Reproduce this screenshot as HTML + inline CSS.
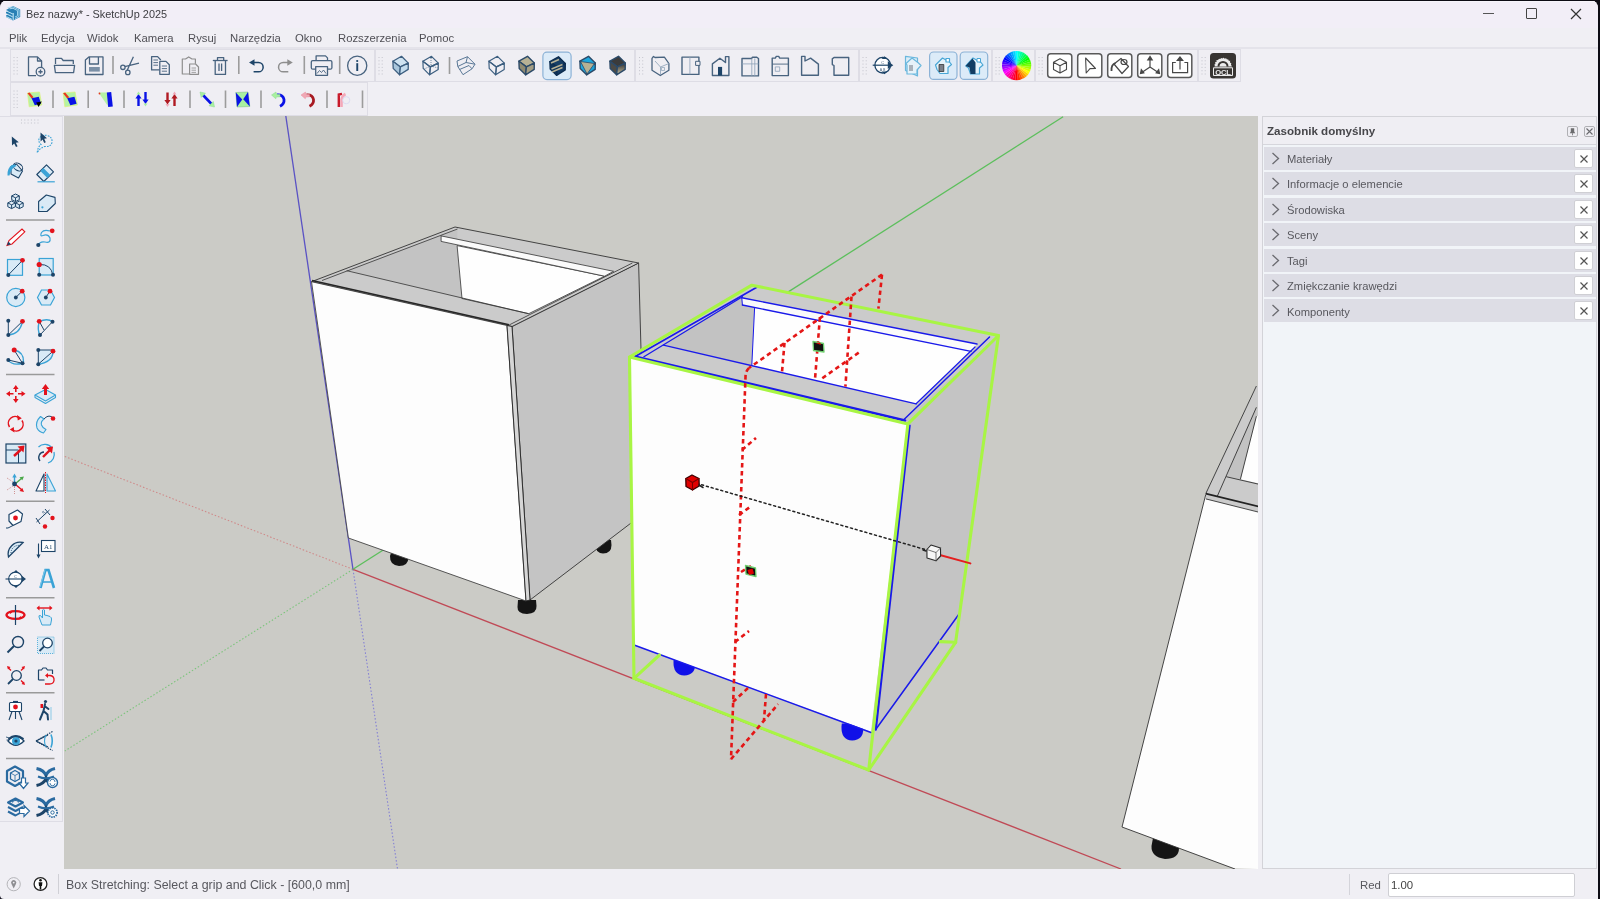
<!DOCTYPE html>
<html><head><meta charset="utf-8">
<style>
html,body{margin:0;padding:0;width:1600px;height:899px;overflow:hidden;background:#0d0c14;}
*{box-sizing:border-box;}
body{font-family:"Liberation Sans",sans-serif;position:relative;}
.abs{position:absolute;}
#win{position:absolute;left:0;top:0;width:1598px;height:899px;background:#f0eff4;border-radius:8px 8px 0 0;overflow:hidden;}
#title{position:absolute;left:0;top:0;width:1598px;height:27.5px;background:#f2eef7;}
.t{position:absolute;white-space:nowrap;color:#3a3a3a;line-height:1;will-change:transform;}
.menu{font-size:11.3px;color:#505056;top:33.2px;}
.tb{position:absolute;background:#efeef3;border:1px solid #dedde5;}
.sep{position:absolute;width:2px;background:#9a9a9a;}
.ic{position:absolute;}
#vp{position:absolute;left:64px;top:116px;width:1194px;height:753px;background:#cbcbc6;overflow:hidden;}
#panel{position:absolute;left:1262px;top:116px;width:335px;height:753px;background:#f1f4f8;border:1px solid #d3d3d8;}
.row{position:absolute;left:1px;width:332px;height:23px;background:#dddde5;}
.row .lbl{will-change:transform;position:absolute;left:22.5px;top:7.3px;font-size:11.2px;line-height:1;color:#58585e;}
.row .x{position:absolute;left:310px;top:2px;width:19px;height:19px;background:#fff;border:1px solid #cfcfd4;border-radius:2px;}
</style></head><body>
<div id="win">
 <div id="title">
  <div class="abs" style="left:0;top:0;width:1598px;height:2px;background:#f7f5fb"></div>
  <svg class="abs" style="left:0;top:0" width="26" height="26" viewBox="0 0 26 26"><path d="M13 6 L20.2 9.6 V17 L13 20.6 L6 17 V15.5 L8 14.5 L6 13.5 V12 L8 11 L6 10 Z" fill="#2a80b4"/><path d="M7.6 7.6 L13 6.9 L19 9.9 V16.6 L15 18.6 M9.5 8.8 L13 8.3 L17.5 10.6 V15.8 L15 17" stroke="#aedcf2" stroke-width="0.9" fill="none"/><path d="M6.3 10.9 L12.8 14 M6.3 13.8 L12.8 16.9 M6.3 16.6 L12 19.4" stroke="#bfe4f5" stroke-width="1" fill="none"/><path d="M13.2 13 V20.3" stroke="#bfe4f5" stroke-width="1.1"/></svg>
  <div class="t" style="left:26px;top:8.8px;font-size:10.9px;color:#3c3c40">Bez nazwy* - SketchUp 2025</div>
  <div class="abs" style="left:1483px;top:13px;width:11px;height:1px;background:#555"></div>
  <div class="abs" style="left:1526px;top:8px;width:11px;height:11px;border:1.3px solid #444;border-radius:1px"></div>
  <svg class="abs" style="left:1570px;top:8px" width="12" height="12" viewBox="0 0 12 12"><path d="M1 1L11 11M11 1L1 11" stroke="#333" stroke-width="1.2"/></svg>
 </div>
 <div class="t menu" style="left:9.3px">Plik</div>
 <div class="t menu" style="left:41.2px">Edycja</div>
 <div class="t menu" style="left:87px">Widok</div>
 <div class="t menu" style="left:134px">Kamera</div>
 <div class="t menu" style="left:188px">Rysuj</div>
 <div class="t menu" style="left:229.7px">Narzędzia</div>
 <div class="t menu" style="left:295.4px">Okno</div>
 <div class="t menu" style="left:337.7px">Rozszerzenia</div>
 <div class="t menu" style="left:419.4px">Pomoc</div>
 <div class="abs" style="left:0;top:47px;width:1598px;height:2px;background:#e4e3ea"></div>

 <!-- toolbars -->
 <div class="tb" style="left:10px;top:49px;width:365px;height:33px"></div>
 <div class="tb" style="left:375px;top:49px;width:260px;height:33px"></div>
 <div class="tb" style="left:635px;top:49px;width:224px;height:33px"></div>
 <div class="tb" style="left:859px;top:49px;width:133px;height:33px"></div>
 <div class="tb" style="left:992px;top:49px;width:43px;height:33px"></div>
 <div class="tb" style="left:1035px;top:49px;width:163px;height:33px"></div>
 <div class="tb" style="left:1198px;top:49px;width:43px;height:33px"></div>
 <div class="tb" style="left:10px;top:82px;width:358px;height:34px"></div>

 <svg class="abs" style="left:0;top:0" width="1600" height="116" viewBox="0 0 1600 116"><rect x="13.5" y="57.0" width="1" height="1" fill="#c4c4cc"/><rect x="16.7" y="57.0" width="1" height="1" fill="#c4c4cc"/><rect x="13.5" y="60.3" width="1" height="1" fill="#c4c4cc"/><rect x="16.7" y="60.3" width="1" height="1" fill="#c4c4cc"/><rect x="13.5" y="63.6" width="1" height="1" fill="#c4c4cc"/><rect x="16.7" y="63.6" width="1" height="1" fill="#c4c4cc"/><rect x="13.5" y="66.9" width="1" height="1" fill="#c4c4cc"/><rect x="16.7" y="66.9" width="1" height="1" fill="#c4c4cc"/><rect x="13.5" y="70.2" width="1" height="1" fill="#c4c4cc"/><rect x="16.7" y="70.2" width="1" height="1" fill="#c4c4cc"/><rect x="13.5" y="73.5" width="1" height="1" fill="#c4c4cc"/><rect x="16.7" y="73.5" width="1" height="1" fill="#c4c4cc"/><g fill="none" stroke="#48637f" stroke-width="1.3" stroke-linejoin="round"><path d="M36 75.6 H28.5 V56.9 H37.5 L41.6 61 V68"/><path d="M37.5 56.9 V61 H41.6"/><circle cx="40.5" cy="71.7" r="4.3" fill="#f0eff4"/><path d="M40.5 69.6 V73.8 M38.4 71.7 H42.6" stroke-width="1.4"/></g><g fill="none" stroke="#48637f" stroke-width="1.3" stroke-linejoin="round"><path d="M55.5 64 V58.3 H61.5 L63.2 60.5 H73.3 V64"/><path d="M54.4 65.4 H74.6 L73.6 72.6 H55.4 Z"/></g><g fill="none" stroke="#48637f" stroke-width="1.3" stroke-linejoin="round"><path d="M85.4 60 L88.9 56.9 H103 V74.5 H85.4 Z"/><path d="M89.5 57 V64 H98.4 V57"/></g><rect x="89" y="67" width="10.8" height="4.6" fill="#7a8fa6"/><line x1="113" y1="56" x2="113" y2="74" stroke="#9c9c9c" stroke-width="1.6"/><g fill="none" stroke="#48637f" stroke-width="1.3"><circle cx="122.9" cy="67.3" r="2.2"/><circle cx="127.8" cy="72.4" r="2.2"/><path d="M124.8 66.6 L139 63.1 M127.2 70.3 L133.4 56.8"/></g><g fill="none" stroke="#48637f" stroke-width="1.3" stroke-linejoin="round"><path d="M159.6 69.9 H151.6 V56.6 H157.6 L160.8 60"/><path d="M159.8 61.4 H166 L169.3 64.7 V74.3 H159.8 Z" fill="#f0eff4"/><path d="M153.4 60 H158 M153.4 62.6 H158 M153.4 65.2 H158 M161.8 66 H167 M161.8 68.6 H167 M161.8 71.2 H167" stroke-width="0.9"/></g><g fill="none" stroke="#8e8e8e" stroke-width="1.2" stroke-linejoin="round"><path d="M189 74 H182.3 V59 H185.5 L188.7 56.9 L192 59 H195.4 V63.8"/><path d="M189.6 64 H195.6 L198.5 67 V74.3 H189.6 Z" fill="#f0eff4"/><path d="M191.5 68 H196 M191.5 70.2 H196 M191.5 72.4 H196" stroke-width="0.8"/></g><g fill="none" stroke="#48637f" stroke-width="1.3" stroke-linejoin="round"><path d="M212.8 60.5 H227.6"/><path d="M217.5 60.4 V57.6 H223.7 V60.4"/><path d="M215.2 60.6 V74.4 H225.5 V60.6"/><path d="M219 63.5 V71 M221.6 63.5 V71"/></g><line x1="238.8" y1="56" x2="238.8" y2="74" stroke="#9c9c9c" stroke-width="1.6"/><g><path d="M253 62.5 H258.5 A4.6 4.6 0 0 1 258.5 71.8 H253.6" fill="none" stroke="#1d4468" stroke-width="1.5"/><path d="M249 62.5 L254.5 59.3 V65.7 Z" fill="#1d4468"/></g><g><path d="M288.7 62.5 H283.2 A4.6 4.6 0 0 0 283.2 71.8 H288.3" fill="none" stroke="#8e8e8e" stroke-width="1.5"/><path d="M292.8 62.5 L287.3 59.3 V65.7 Z" fill="#8e8e8e"/></g><line x1="304.3" y1="56" x2="304.3" y2="74" stroke="#9c9c9c" stroke-width="1.6"/><g fill="none" stroke="#48637f" stroke-width="1.3" stroke-linejoin="round"><path d="M316.1 60.5 V55.9 H325.5 L327.5 57.9 V60.5"/><rect x="311.3" y="60.6" width="20.6" height="8.6" rx="1.5"/><rect x="315.7" y="66.6" width="11.8" height="8.7" fill="#f0eff4"/><path d="M317 73.5 L319.5 70.5 L321.5 72.5 L323.5 70 L326 73.5" stroke-width="0.9"/></g><line x1="339.7" y1="56" x2="339.7" y2="74" stroke="#9c9c9c" stroke-width="1.6"/><g><circle cx="357.2" cy="65.7" r="9.6" fill="none" stroke="#48637f" stroke-width="1.3"/><circle cx="357.2" cy="61" r="1.1" fill="#1d4468"/><rect x="356.3" y="63.2" width="1.9" height="7.8" fill="#1d4468"/></g><rect x="378.5" y="57.0" width="1" height="1" fill="#c4c4cc"/><rect x="381.7" y="57.0" width="1" height="1" fill="#c4c4cc"/><rect x="378.5" y="60.3" width="1" height="1" fill="#c4c4cc"/><rect x="381.7" y="60.3" width="1" height="1" fill="#c4c4cc"/><rect x="378.5" y="63.6" width="1" height="1" fill="#c4c4cc"/><rect x="381.7" y="63.6" width="1" height="1" fill="#c4c4cc"/><rect x="378.5" y="66.9" width="1" height="1" fill="#c4c4cc"/><rect x="381.7" y="66.9" width="1" height="1" fill="#c4c4cc"/><rect x="378.5" y="70.2" width="1" height="1" fill="#c4c4cc"/><rect x="381.7" y="70.2" width="1" height="1" fill="#c4c4cc"/><rect x="378.5" y="73.5" width="1" height="1" fill="#c4c4cc"/><rect x="381.7" y="73.5" width="1" height="1" fill="#c4c4cc"/><g stroke="#3d5f80" stroke-width="1.3" stroke-linejoin="round"><polygon points="401.5,56.3 408.3,63.1 400.4,66.9 392.9,61.2" fill="#cfe3f1"/><polygon points="392.9,61.2 400.4,66.9 399.6,74.8 393.2,68.4" fill="#a9c6dc"/><polygon points="400.4,66.9 408.3,63.1 408.2,69.4 399.6,74.8" fill="#c4dced"/></g><g stroke="#3d5f80" stroke-width="1.2" stroke-linejoin="round"><polygon points="431.5,56.3 438.3,63.1 430.4,66.9 422.9,61.2" fill="none"/><polygon points="422.9,61.2 430.4,66.9 429.6,74.8 423.2,68.4" fill="none"/><polygon points="430.4,66.9 438.3,63.1 438.2,69.4 429.6,74.8" fill="none"/><path d="M431 58 V66 L424 69 M431 66 L438 68" stroke-width="0.7" stroke-dasharray="1 1" fill="none"/></g><line x1="449.5" y1="57" x2="449.5" y2="74" stroke="#9c9c9c" stroke-width="1.6"/><g fill="none" stroke="#5a7896" stroke-width="1"><path d="M457 61 L467.5 56.7 L475 64.2 L472 68.8 L463 74.7 L457.8 66.5 Z M457.8 66.5 L466 62.5 L475 64.2 M466 62.5 L467.5 56.7 M459.5 69.5 L469 65.5 L472 68.8"/></g><g stroke="#3d5f80" stroke-width="1.2" stroke-linejoin="round"><polygon points="497.5,56.3 504.3,63.1 496.4,66.9 488.9,61.2" fill="none"/><polygon points="488.9,61.2 496.4,66.9 495.6,74.8 489.2,68.4" fill="none"/><polygon points="496.4,66.9 504.3,63.1 504.2,69.4 495.6,74.8" fill="none"/></g><g stroke="#2c4a68" stroke-width="1.4" stroke-linejoin="round"><polygon points="527.5,56.3 534.3,63.1 526.4,66.9 518.9,61.2" fill="#b7b194"/><polygon points="518.9,61.2 526.4,66.9 525.6,74.8 519.2,68.4" fill="#8e8a72"/><polygon points="526.4,66.9 534.3,63.1 534.2,69.4 525.6,74.8" fill="#a49e84"/></g><rect x="542.9" y="52.2" width="28.200000000000045" height="27.39999999999999" rx="4" fill="#dcebf8" stroke="#8cb2d6" stroke-width="1.2"/><g stroke="#0d2d50" stroke-width="1.4" stroke-linejoin="round"><polygon points="558.5,56.8 565.3,63.6 557.4,67.4 549.9,61.7" fill="#173f66"/><polygon points="549.9,61.7 557.4,67.4 556.6,75.3 550.2,68.9" fill="#0f3358"/><polygon points="557.4,67.4 565.3,63.6 565.2,69.9 556.6,75.3" fill="#153b62"/><path d="M551 63 L559 59.5 M551.5 69 L562.5 64.5 M552 72 L562.5 67.5" stroke="#b7b194" stroke-width="1.5" fill="none"/></g><g stroke="#2c4a68" stroke-width="1.4" stroke-linejoin="round"><polygon points="588.5,56.3 595.3,63.1 587.4,66.9 579.9,61.2" fill="#1ea6dc"/><polygon points="579.9,61.2 587.4,66.9 586.6,74.8 580.2,68.4" fill="#22a8de"/><polygon points="587.4,66.9 595.3,63.1 595.2,69.4 586.6,74.8" fill="#1aa0d6"/><polygon points="580.5,61.5 594.5,63.5 587,74" fill="#b7b194" stroke="#2c4a68" stroke-width="0.8"/></g><defs><linearGradient id="dg" x1="0" y1="0" x2="0" y2="1"><stop offset="0" stop-color="#2d2d2d"/><stop offset="1" stop-color="#c9c0a0"/></linearGradient></defs><g stroke="#2c4a68" stroke-width="1.4" stroke-linejoin="round"><polygon points="618.5,56.3 625.3,63.1 617.4,66.9 609.9,61.2" fill="#3b3b3b"/><polygon points="609.9,61.2 617.4,66.9 616.6,74.8 610.2,68.4" fill="#4c4a45"/><polygon points="617.4,66.9 625.3,63.1 625.2,69.4 616.6,74.8" fill="url(#dg)"/></g><rect x="639.0" y="57.0" width="1" height="1" fill="#c4c4cc"/><rect x="642.2" y="57.0" width="1" height="1" fill="#c4c4cc"/><rect x="639.0" y="60.3" width="1" height="1" fill="#c4c4cc"/><rect x="642.2" y="60.3" width="1" height="1" fill="#c4c4cc"/><rect x="639.0" y="63.6" width="1" height="1" fill="#c4c4cc"/><rect x="642.2" y="63.6" width="1" height="1" fill="#c4c4cc"/><rect x="639.0" y="66.9" width="1" height="1" fill="#c4c4cc"/><rect x="642.2" y="66.9" width="1" height="1" fill="#c4c4cc"/><rect x="639.0" y="70.2" width="1" height="1" fill="#c4c4cc"/><rect x="642.2" y="70.2" width="1" height="1" fill="#c4c4cc"/><rect x="639.0" y="73.5" width="1" height="1" fill="#c4c4cc"/><rect x="642.2" y="73.5" width="1" height="1" fill="#c4c4cc"/><g fill="none" stroke="#48637f" stroke-width="1.3" stroke-linejoin="round"><path d="M652 58.3 L653.5 56.4 L655 57.5 L664.4 57.1 L668.9 63.5 V70.2 L660.3 75.5 L652 70.2 Z"/><path d="M655 61 L660.5 67 L668.9 63.5 M660.5 67 V75" stroke-width="0.8" stroke="#8aa0b6"/><rect x="661.5" y="67.5" width="3" height="3" stroke-width="0.7" stroke="#8aa0b6"/></g><g fill="none" stroke="#48637f" stroke-width="1.4" stroke-linejoin="round"><rect x="682" y="57.1" width="16.9" height="17.3"/><path d="M689.9 57.1 V74.4" stroke-width="0.8" stroke="#8aa0b6"/><rect x="695.6" y="61.3" width="4.4" height="4.1" fill="#f0eff4" stroke-width="1"/></g><g fill="none" stroke="#48637f" stroke-width="1.4" stroke-linejoin="round"><path d="M712.4 75.5 V63.9 L719.9 58.3 L725.5 62.5 V56.6 H728.9 V75.5 Z"/><rect x="718" y="66.9" width="4.1" height="8.6" fill="#1d4468" stroke="none"/></g><g fill="none" stroke="#48637f" stroke-width="1.4" stroke-linejoin="round"><path d="M742 75.9 V58.5 H751.5 L752.5 57.2 H756.5 L758.5 58.5 V75.9 Z"/><path d="M742 63.9 H758.5 M751.8 58.5 V75.9 M754.8 58.5 V75.9" stroke-width="0.8" stroke="#8aa0b6"/></g><g fill="none" stroke="#48637f" stroke-width="1.4" stroke-linejoin="round"><path d="M772.2 75.6 V58.1 H775.3 L776.3 56.4 H778.7 L779.7 58.1 H788.4 V75.6 Z"/><path d="M772.2 64.1 H788.4" stroke-width="0.9"/><rect x="775.3" y="66.9" width="4.4" height="4.4" stroke-width="0.8" stroke="#8aa0b6"/></g><g fill="none" stroke="#48637f" stroke-width="1.4" stroke-linejoin="round"><path d="M801.6 75.3 V56.4 H805 V61 L810.6 58.1 L818.4 64.1 V75.3 Z"/></g><g fill="none" stroke="#48637f" stroke-width="1.4" stroke-linejoin="round"><path d="M834 75.3 V65.5 L832.3 64.6 V58.9 L834 57.5 H848.7 V75.3 Z"/></g><rect x="862.5" y="57.0" width="1" height="1" fill="#c4c4cc"/><rect x="865.7" y="57.0" width="1" height="1" fill="#c4c4cc"/><rect x="862.5" y="60.3" width="1" height="1" fill="#c4c4cc"/><rect x="865.7" y="60.3" width="1" height="1" fill="#c4c4cc"/><rect x="862.5" y="63.6" width="1" height="1" fill="#c4c4cc"/><rect x="865.7" y="63.6" width="1" height="1" fill="#c4c4cc"/><rect x="862.5" y="66.9" width="1" height="1" fill="#c4c4cc"/><rect x="865.7" y="66.9" width="1" height="1" fill="#c4c4cc"/><rect x="862.5" y="70.2" width="1" height="1" fill="#c4c4cc"/><rect x="865.7" y="70.2" width="1" height="1" fill="#c4c4cc"/><rect x="862.5" y="73.5" width="1" height="1" fill="#c4c4cc"/><rect x="865.7" y="73.5" width="1" height="1" fill="#c4c4cc"/><g><circle cx="882.7" cy="65.2" r="7.8" fill="#fff" stroke="#1d4468" stroke-width="1.3"/><path d="M872.7 65.2 H890" stroke="#1d4468" stroke-width="1.2"/><path d="M893.3 65.2 L887.8 61.3 V69.1 Z M884.5 56.3 L881.5 59 H887.5 Z M884.5 74.2 L881.5 71.5 H887.5 Z" fill="#1d4468"/><text x="882.6" y="63.5" font-size="4" text-anchor="middle" fill="#48637f" font-family="Liberation Sans">C</text><text x="882.6" y="70.5" font-size="3.6" text-anchor="middle" fill="#48637f" font-family="Liberation Sans">A B</text></g><g stroke="#6ab7dd" stroke-width="1.2" fill="#cfe8f5" stroke-linejoin="round"><path d="M905.5 56.3 L917.5 58 L917.5 76 L905.5 70.5 Z" fill="#dcedf7"/><path d="M906 63.5 L912 58 L918.5 63 L921 65.5 L917 70 V74 L907 74 V65 Z" fill="#e6f2f9"/><rect x="909" y="65" width="4" height="6" fill="#a9b2bb" stroke="none"/></g><rect x="929.6" y="52.0" width="27.399999999999977" height="27.400000000000006" rx="4" fill="#dcebf8" stroke="#8cb2d6" stroke-width="1.2"/><g stroke="#4aa7d6" stroke-width="1.2" fill="#e6f3fa" stroke-linejoin="round"><path d="M935.5 65 L942.5 58 L949.5 62 L951.5 64.5 L948 67.5 V73.5 L940 73.5 L937 69.5 Z"/><path d="M946 58.5 V62 L949.5 62 V58.5 Z" fill="#fff"/><rect x="939" y="64.5" width="4.8" height="7" fill="#7a7f88" stroke="#222" stroke-width="0.7"/></g><rect x="960.2" y="52.0" width="27.5" height="27.400000000000006" rx="4" fill="#dcebf8" stroke="#8cb2d6" stroke-width="1.2"/><g stroke-linejoin="round"><path d="M965.8 66 L973 58 L981 62.5 L983 65 L979.5 68 V74 L970.5 74 L968.5 68 Z" fill="#e6f3fa" stroke="#4aa7d6" stroke-width="1.2"/><path d="M965.5 66 L972.5 58.5 L975.5 62.5 V74 H970.5 L969.5 67.5 Z" fill="#123d63"/><path d="M977 58.5 V62 L980.5 62 V58.5 Z" fill="#fff" stroke="#4aa7d6" stroke-width="1"/></g><rect x="995.5" y="57.0" width="1" height="1" fill="#c4c4cc"/><rect x="998.7" y="57.0" width="1" height="1" fill="#c4c4cc"/><rect x="995.5" y="60.3" width="1" height="1" fill="#c4c4cc"/><rect x="998.7" y="60.3" width="1" height="1" fill="#c4c4cc"/><rect x="995.5" y="63.6" width="1" height="1" fill="#c4c4cc"/><rect x="998.7" y="63.6" width="1" height="1" fill="#c4c4cc"/><rect x="995.5" y="66.9" width="1" height="1" fill="#c4c4cc"/><rect x="998.7" y="66.9" width="1" height="1" fill="#c4c4cc"/><rect x="995.5" y="70.2" width="1" height="1" fill="#c4c4cc"/><rect x="998.7" y="70.2" width="1" height="1" fill="#c4c4cc"/><rect x="995.5" y="73.5" width="1" height="1" fill="#c4c4cc"/><rect x="998.7" y="73.5" width="1" height="1" fill="#c4c4cc"/><defs><clipPath id="cw"><circle cx="1016.6" cy="65.6" r="14.6"/></clipPath></defs><g clip-path="url(#cw)"><polygon points="1016.6,65.6 1014.86,45.68 1018.52,45.69" fill="#00ffff"/><polygon points="1016.6,65.6 1018.34,45.68 1021.94,46.33" fill="#00ffd4"/><polygon points="1016.6,65.6 1021.78,46.28 1025.21,47.55" fill="#00ffa9"/><polygon points="1016.6,65.6 1025.05,47.47 1028.21,49.32" fill="#00ff7f"/><polygon points="1016.6,65.6 1028.07,49.22 1030.87,51.58" fill="#00ff55"/><polygon points="1016.6,65.6 1030.74,51.46 1033.08,54.27" fill="#00ff2a"/><polygon points="1016.6,65.6 1032.98,54.13 1034.80,57.31" fill="#00ff00"/><polygon points="1016.6,65.6 1034.73,57.15 1035.96,60.59" fill="#2aff00"/><polygon points="1016.6,65.6 1035.92,60.42 1036.54,64.03" fill="#54ff00"/><polygon points="1016.6,65.6 1036.52,63.86 1036.51,67.52" fill="#7fff00"/><polygon points="1016.6,65.6 1036.52,67.34 1035.87,70.94" fill="#aaff00"/><polygon points="1016.6,65.6 1035.92,70.78 1034.65,74.21" fill="#d4ff00"/><polygon points="1016.6,65.6 1034.73,74.05 1032.88,77.21" fill="#ffff00"/><polygon points="1016.6,65.6 1032.98,77.07 1030.62,79.87" fill="#ffd400"/><polygon points="1016.6,65.6 1030.74,79.74 1027.93,82.08" fill="#ffaa00"/><polygon points="1016.6,65.6 1028.07,81.98 1024.89,83.80" fill="#ff7f00"/><polygon points="1016.6,65.6 1025.05,83.73 1021.61,84.96" fill="#ff5400"/><polygon points="1016.6,65.6 1021.78,84.92 1018.17,85.54" fill="#ff2a00"/><polygon points="1016.6,65.6 1018.34,85.52 1014.68,85.51" fill="#ff0000"/><polygon points="1016.6,65.6 1014.86,85.52 1011.26,84.87" fill="#ff002a"/><polygon points="1016.6,65.6 1011.42,84.92 1007.99,83.65" fill="#ff0055"/><polygon points="1016.6,65.6 1008.15,83.73 1004.99,81.88" fill="#ff007f"/><polygon points="1016.6,65.6 1005.13,81.98 1002.33,79.62" fill="#ff00aa"/><polygon points="1016.6,65.6 1002.46,79.74 1000.12,76.93" fill="#ff00d4"/><polygon points="1016.6,65.6 1000.22,77.07 998.40,73.89" fill="#ff00ff"/><polygon points="1016.6,65.6 998.47,74.05 997.24,70.61" fill="#d400ff"/><polygon points="1016.6,65.6 997.28,70.78 996.66,67.17" fill="#aa00ff"/><polygon points="1016.6,65.6 996.68,67.34 996.69,63.68" fill="#7f00ff"/><polygon points="1016.6,65.6 996.68,63.86 997.33,60.26" fill="#5400ff"/><polygon points="1016.6,65.6 997.28,60.42 998.55,56.99" fill="#2a00ff"/><polygon points="1016.6,65.6 998.47,57.15 1000.32,53.99" fill="#0000ff"/><polygon points="1016.6,65.6 1000.22,54.13 1002.58,51.33" fill="#002aff"/><polygon points="1016.6,65.6 1002.46,51.46 1005.27,49.12" fill="#0054ff"/><polygon points="1016.6,65.6 1005.13,49.22 1008.31,47.40" fill="#007fff"/><polygon points="1016.6,65.6 1008.15,47.47 1011.59,46.24" fill="#00a9ff"/><polygon points="1016.6,65.6 1011.42,46.28 1015.03,45.66" fill="#00d4ff"/></g><rect x="1038.5" y="57.0" width="1" height="1" fill="#c4c4cc"/><rect x="1041.7" y="57.0" width="1" height="1" fill="#c4c4cc"/><rect x="1038.5" y="60.3" width="1" height="1" fill="#c4c4cc"/><rect x="1041.7" y="60.3" width="1" height="1" fill="#c4c4cc"/><rect x="1038.5" y="63.6" width="1" height="1" fill="#c4c4cc"/><rect x="1041.7" y="63.6" width="1" height="1" fill="#c4c4cc"/><rect x="1038.5" y="66.9" width="1" height="1" fill="#c4c4cc"/><rect x="1041.7" y="66.9" width="1" height="1" fill="#c4c4cc"/><rect x="1038.5" y="70.2" width="1" height="1" fill="#c4c4cc"/><rect x="1041.7" y="70.2" width="1" height="1" fill="#c4c4cc"/><rect x="1038.5" y="73.5" width="1" height="1" fill="#c4c4cc"/><rect x="1041.7" y="73.5" width="1" height="1" fill="#c4c4cc"/><rect x="1047.7" y="53.7" width="24.1" height="23.9" rx="3" fill="#fff" stroke="#595959" stroke-width="1.5"/><rect x="1077.7" y="53.7" width="24.1" height="23.9" rx="3" fill="#fff" stroke="#595959" stroke-width="1.5"/><rect x="1107.7" y="53.7" width="24.1" height="23.9" rx="3" fill="#fff" stroke="#595959" stroke-width="1.5"/><rect x="1137.7" y="53.7" width="24.1" height="23.9" rx="3" fill="#fff" stroke="#595959" stroke-width="1.5"/><rect x="1167.7" y="53.7" width="24.1" height="23.9" rx="3" fill="#fff" stroke="#595959" stroke-width="1.5"/><g fill="none" stroke="#474747" stroke-width="1.1" stroke-linejoin="round"><path d="M1060 58.7 L1066.5 62.3 V69.5 L1060 73 L1053.5 69.5 V62.3 Z M1053.5 62.3 L1060 65.8 L1066.5 62.3 M1060 65.8 V73"/></g><path d="M1085.6 58 L1095.5 68.5 L1090 68.6 L1086.2 73 Z" fill="none" stroke="#474747" stroke-width="1.1" stroke-linejoin="round"/><g fill="none" stroke="#474747" stroke-width="1.2" stroke-linejoin="round"><path d="M1114 64 L1121 58.5 L1128.5 66.5 L1122 73.5 Z"/><path d="M1111.5 71 Q1111 64.5 1115.5 63" stroke-width="1.8"/><ellipse cx="1124" cy="62" rx="3" ry="2.5"/></g><g stroke="#474747" stroke-width="1.2" fill="#474747"><path d="M1150 67 V59 M1150 67 L1142.5 72 M1150 67 L1157.5 72" fill="none"/><path d="M1150 56.5 L1147.8 60 H1152.2 Z M1140.5 73.5 L1141.3 69.7 L1143.8 72.8 Z M1159.5 73.5 L1158.7 69.7 L1156.2 72.8 Z"/></g><g fill="none" stroke="#474747" stroke-width="1.2"><path d="M1175.8 62.5 H1172.6 V72.6 H1187.6 V62.5 H1184.4 M1180 69.5 V58.5"/><path d="M1180 57 L1177.3 60.3 H1182.7 Z" fill="#474747"/></g><rect x="1201.5" y="57.0" width="1" height="1" fill="#c4c4cc"/><rect x="1204.7" y="57.0" width="1" height="1" fill="#c4c4cc"/><rect x="1201.5" y="60.3" width="1" height="1" fill="#c4c4cc"/><rect x="1204.7" y="60.3" width="1" height="1" fill="#c4c4cc"/><rect x="1201.5" y="63.6" width="1" height="1" fill="#c4c4cc"/><rect x="1204.7" y="63.6" width="1" height="1" fill="#c4c4cc"/><rect x="1201.5" y="66.9" width="1" height="1" fill="#c4c4cc"/><rect x="1204.7" y="66.9" width="1" height="1" fill="#c4c4cc"/><rect x="1201.5" y="70.2" width="1" height="1" fill="#c4c4cc"/><rect x="1204.7" y="70.2" width="1" height="1" fill="#c4c4cc"/><rect x="1201.5" y="73.5" width="1" height="1" fill="#c4c4cc"/><rect x="1204.7" y="73.5" width="1" height="1" fill="#c4c4cc"/><rect x="1210" y="53" width="26" height="25.5" rx="3.5" fill="#383532"/><path d="M1214.2 66.5 A8.8 8.8 0 0 1 1231.8 66.5 Z" fill="#ececec"/><path d="M1214.2 66.5 A8.8 8.8 0 0 1 1231.8 66.5" fill="none" stroke="#383532" stroke-width="1.2" stroke-dasharray="1.2 1.3"/><path d="M1217.5 66.5 A5.5 5.5 0 0 1 1228.5 66.5 Z" fill="#383532"/><path d="M1219.5 66.5 A3.5 3.5 0 0 1 1226.5 66.5 Z" fill="#ececec"/><rect x="1213" y="67.3" width="20" height="8.6" rx="1" fill="#ececec"/><rect x="1214" y="68.3" width="18" height="6.6" fill="#383532"/><text x="1223" y="74.6" font-size="7.6" font-weight="bold" text-anchor="middle" fill="#ececec" font-family="Liberation Sans" letter-spacing="-0.2">OCL</text><rect x="13.5" y="90.5" width="1" height="1" fill="#c4c4cc"/><rect x="16.7" y="90.5" width="1" height="1" fill="#c4c4cc"/><rect x="13.5" y="93.8" width="1" height="1" fill="#c4c4cc"/><rect x="16.7" y="93.8" width="1" height="1" fill="#c4c4cc"/><rect x="13.5" y="97.1" width="1" height="1" fill="#c4c4cc"/><rect x="16.7" y="97.1" width="1" height="1" fill="#c4c4cc"/><rect x="13.5" y="100.4" width="1" height="1" fill="#c4c4cc"/><rect x="16.7" y="100.4" width="1" height="1" fill="#c4c4cc"/><rect x="13.5" y="103.7" width="1" height="1" fill="#c4c4cc"/><rect x="16.7" y="103.7" width="1" height="1" fill="#c4c4cc"/><rect x="13.5" y="107.0" width="1" height="1" fill="#c4c4cc"/><rect x="16.7" y="107.0" width="1" height="1" fill="#c4c4cc"/><g transform="translate(0 0)"><polygon points="27.5,93 39.5,92 41.8,105 29.2,106.8" fill="#b4f2a4" stroke="#dcf07a" stroke-width="0.7"/><path d="M27.5 93.2 L29.6 92.6 L33.6 97.2 L31.6 98.6 Z" fill="#e8361e"/><polygon points="31.6,98.2 38.8,96.8 41,103.8 34.8,105.2" fill="#0a12e6"/></g><path d="M36.2 102.4 L41.8 101.6 L38.6 107 Z" fill="#000"/><line x1="53" y1="90.5" x2="53" y2="108" stroke="#9c9c9c" stroke-width="1.6"/><g transform="translate(35.6 0)"><polygon points="27.5,93 39.5,92 41.8,105 29.2,106.8" fill="#b4f2a4" stroke="#dcf07a" stroke-width="0.7"/><path d="M27.5 93.2 L29.6 92.6 L33.6 97.2 L31.6 98.6 Z" fill="#e8361e"/><polygon points="31.6,98.2 38.8,96.8 41,103.8 34.8,105.2" fill="#0a12e6"/></g><line x1="88.2" y1="90.5" x2="88.2" y2="108" stroke="#9c9c9c" stroke-width="1.6"/><polygon points="98.5,92.5 107.5,92.5 107.8,106" fill="#b4f2a4"/><circle cx="99.5" cy="93.5" r="0.9" fill="#e8361e"/><polygon points="106.8,92.6 111.2,92 112.8,106.5 108.2,107" fill="#0a12e6"/><line x1="124" y1="90.5" x2="124" y2="108" stroke="#9c9c9c" stroke-width="1.6"/><g><path d="M138.5 106 V97.5" stroke="#0a12e6" stroke-width="2.4" fill="none"/><path d="M138.5 94 L135.4 98.5 H141.6 Z" fill="#0a12e6"/><path d="M138.5 91.5 L136.5 94.5 H140.5 Z" fill="#a8f0a0"/><path d="M145.5 92 V100.5" stroke="#0a12e6" stroke-width="2.4" fill="none"/><path d="M145.5 104 L142.4 99.5 H148.6 Z" fill="#0a12e6"/><path d="M145.5 106.5 L143.5 103.5 H147.5 Z" fill="#a8f0a0"/></g><g><path d="M167.5 92.5 V101" stroke="#b01a22" stroke-width="2.4" fill="none"/><path d="M167.5 104.5 L164.4 100 H170.6 Z" fill="#b01a22"/><path d="M167.5 107 L165.5 104 H169.5 Z" fill="#f0a8b8"/><path d="M174.5 106 V97.5" stroke="#b01a22" stroke-width="2.4" fill="none"/><path d="M174.5 94 L171.4 98.5 H177.6 Z" fill="#b01a22"/><path d="M174.5 91.5 L172.5 94.5 H176.5 Z" fill="#f0a8b8"/></g><line x1="190" y1="90.5" x2="190" y2="108" stroke="#9c9c9c" stroke-width="1.6"/><g><path d="M202.5 94.5 L212 104.5" stroke="#0a12e6" stroke-width="2.6"/><path d="M200 92 L205.5 93.2 L201.2 97.5 Z M214.5 107 L209 105.8 L213.3 101.5 Z" fill="#a8f0a0" stroke="#8cd890" stroke-width="0.5"/></g><line x1="225.5" y1="90.5" x2="225.5" y2="108" stroke="#9c9c9c" stroke-width="1.6"/><g><polygon points="235.8,92.5 248,92 249.8,106.5 237,107" fill="#a8f0a0" stroke="#7ab880" stroke-width="0.5"/><polygon points="235.8,92.5 242.2,99.5 237,107" fill="#0a12e6"/><polygon points="248,92 243.2,99.3 249.8,106.5" fill="#0a12e6"/></g><line x1="261" y1="90.5" x2="261" y2="108" stroke="#9c9c9c" stroke-width="1.6"/><g><path d="M277 95 Q283 94.5 284 99.5 Q284.5 104 280 106.3" stroke="#0a12e6" stroke-width="2.8" fill="none"/><path d="M271.5 95 L276 92 L276.5 94.3 L280 94.6 V96.8 L276.3 97 L275.8 98.8 Z" fill="#a8f0a0" stroke="#8cd890" stroke-width="0.5"/></g><g><path d="M306.5 95 Q312.5 94.5 313.5 99.5 Q314 104 309.5 106.3" stroke="#a81a22" stroke-width="2.8" fill="none"/><path d="M301 95 L305.5 92 L306 94.3 L309.5 94.6 V96.8 L305.8 97 L305.3 98.8 Z" fill="#f0a8b4" stroke="#e890a0" stroke-width="0.5"/></g><line x1="327" y1="90.5" x2="327" y2="108" stroke="#9c9c9c" stroke-width="1.6"/><g><path d="M338.8 107 V94.5 L342 93.8" stroke="#c81a2a" stroke-width="2.4" fill="none"/><path d="M341.5 107 V99.5 Q342.5 95.5 345.5 94" stroke="#f4a8b8" stroke-width="2.6" fill="none"/><circle cx="346.2" cy="100.2" r="3.6" fill="none" stroke="#d8d8f0" stroke-width="0.9"/></g><line x1="362.5" y1="90.5" x2="362.5" y2="108" stroke="#9c9c9c" stroke-width="1.6"/></svg>


 <!-- left toolbar -->
 <div class="tb" style="left:0px;top:116px;width:63px;height:706px;border-left:none"></div>
 <svg class="abs" style="left:0;top:0" width="64" height="899" viewBox="0 0 64 899"><rect x="21.0" y="119.5" width="1" height="1" fill="#c4c4cc"/><rect x="21.0" y="122.5" width="1" height="1" fill="#c4c4cc"/><rect x="24.3" y="119.5" width="1" height="1" fill="#c4c4cc"/><rect x="24.3" y="122.5" width="1" height="1" fill="#c4c4cc"/><rect x="27.6" y="119.5" width="1" height="1" fill="#c4c4cc"/><rect x="27.6" y="122.5" width="1" height="1" fill="#c4c4cc"/><rect x="30.9" y="119.5" width="1" height="1" fill="#c4c4cc"/><rect x="30.9" y="122.5" width="1" height="1" fill="#c4c4cc"/><rect x="34.2" y="119.5" width="1" height="1" fill="#c4c4cc"/><rect x="34.2" y="122.5" width="1" height="1" fill="#c4c4cc"/><rect x="37.5" y="119.5" width="1" height="1" fill="#c4c4cc"/><rect x="37.5" y="122.5" width="1" height="1" fill="#c4c4cc"/><path d="M11.8 136.5 L18.8 142.2 L15.8 142.8 L17.6 146.3 L16 147 L14.2 143.5 L12 145.6 Z" fill="#1d4468"/><path d="M37.2 152.5 Q38 146.5 41 144.5 Q37.5 141 39.5 138 Q42 134.5 47 135.5 Q52.5 137 52 142 Q51.5 147 44.5 146.5 Q40 148 37.2 152.5" fill="none" stroke="#3aa3d6" stroke-width="1.1" stroke-dasharray="1.7 1.1"/><path d="M40.5 132.5 L47 138.3 L44.2 138.8 L45.8 142.2 L44.2 142.9 L42.6 139.5 L40.6 141.6 Z" fill="#1d4468"/><g stroke-linejoin="round"><path d="M11 166.5 L16.5 164 L22.5 171 L18.5 178 L11 174 Z" fill="#d9eaf6" stroke="#1d4468" stroke-width="1.1"/><ellipse cx="18" cy="167" rx="5" ry="3.5" fill="none" stroke="#1d4468" stroke-width="1" transform="rotate(30 18 167)"/><path d="M7.5 175.5 Q7 168 12 165 Q15 163.5 16.5 166 Q11 168 9.5 175.5 Z" fill="#3aa3d6"/></g><g stroke-linejoin="round"><polygon points="36.8,174.5 46.5,164.8 53.5,171.8 43.8,181.5" fill="#d9eaf6" stroke="#1d4468" stroke-width="1.1"/><polygon points="40.4,170.9 43.4,167.9 50.4,174.9 47.4,177.9" fill="#3aa3d6"/><path d="M37.5 181.8 H54.8" stroke="#3aa3d6" stroke-width="1.2"/></g><g stroke-linejoin="round"><path d="M15.5 194.0 L19.3 195.9 V199.70000000000002 L15.5 201.60000000000002 L11.7 199.70000000000002 V195.9 Z M11.7 195.9 L15.5 197.8 L19.3 195.9 M15.5 197.8 V201.60000000000002" fill="#d9eaf6" stroke="#1d4468" stroke-width="1"/><path d="M11.6 201.0 L15.399999999999999 202.9 V206.70000000000002 L11.6 208.60000000000002 L7.8 206.70000000000002 V202.9 Z M7.8 202.9 L11.6 204.8 L15.399999999999999 202.9 M11.6 204.8 V208.60000000000002" fill="#d9eaf6" stroke="#1d4468" stroke-width="1"/><path d="M19.4 201.0 L23.2 202.9 V206.70000000000002 L19.4 208.60000000000002 L15.599999999999998 206.70000000000002 V202.9 Z M15.599999999999998 202.9 L19.4 204.8 L23.2 202.9 M19.4 204.8 V208.60000000000002" fill="#d9eaf6" stroke="#1d4468" stroke-width="1"/></g><g stroke-linejoin="round"><path d="M38.6 201.5 L46.3 195 L55 197.4 L55.3 203.5 L47 211.5 L38.6 211.5 Z" fill="#d9eaf6" stroke="#1d4468" stroke-width="1.1"/><circle cx="42.4" cy="207.3" r="1.1" fill="#3aa3d6"/></g><line x1="6" y1="220" x2="54.5" y2="220" stroke="#9a9a9a" stroke-width="1.6"/><g><path d="M7 245.5 L9 240.5 L22 229 L24.8 231.8 L12 244 Z" fill="#fff" stroke="#e3121c" stroke-width="1.1"/><path d="M7 245.5 L8.3 241.6 L11 244.3 Z" fill="#1d4468"/></g><g><path d="M38.3 245 Q40 241 45 242 Q51 243.5 50 238 Q48 233.5 43 235.5 Q39.5 237 41.5 232.5 Q44 229 50 231" fill="none" stroke="#3aa3d6" stroke-width="1.2"/><circle cx="38.3" cy="245" r="2.1" fill="#1d4468"/><circle cx="52.2" cy="230.8" r="2.4" fill="#e3121c"/></g><g><rect x="7.5" y="259.5" width="15" height="15.8" fill="#d9eaf6" stroke="#3aa3d6" stroke-width="1.2"/><path d="M8.3 275 L22.5 260.3" stroke="#1d4468" stroke-width="1"/><circle cx="8.3" cy="275" r="2" fill="#1d4468"/><circle cx="22.5" cy="260.3" r="2.4" fill="#e3121c"/></g><g><rect x="39.2" y="258.5" width="14" height="16.5" fill="#d9eaf6" stroke="#3aa3d6" stroke-width="1.2"/><path d="M39.5 264.5 Q51 264 52.8 275" fill="none" stroke="#1d4468" stroke-width="1"/><circle cx="39.2" cy="274.8" r="2" fill="#1d4468"/><circle cx="53" cy="274.8" r="2" fill="#1d4468"/><circle cx="39.2" cy="264.5" r="2.6" fill="#e3121c"/></g><g><circle cx="15.8" cy="297.5" r="9.1" fill="#d9eaf6" stroke="#3aa3d6" stroke-width="1.2"/><path d="M15.8 297.5 L22.2 291.2" stroke="#1d4468" stroke-width="1"/><circle cx="15.8" cy="297.5" r="1.9" fill="#1d4468"/><circle cx="22.2" cy="291.2" r="2.4" fill="#e3121c"/></g><g><polygon points="37.5,297.5 41.5,290 50.5,290 54.5,297.5 50.5,305 41.5,305" fill="#d9eaf6" stroke="#3aa3d6" stroke-width="1.2"/><path d="M45.8 297.5 L50 291" stroke="#1d4468" stroke-width="1"/><circle cx="45.8" cy="297.5" r="1.9" fill="#1d4468"/><circle cx="50" cy="291.2" r="2.4" fill="#e3121c"/></g><g><path d="M8.3 320.8 V335 L22.5 321.3" fill="none" stroke="#1d4468" stroke-width="1"/><path d="M8.3 335 Q20 334 22.5 321.3" fill="none" stroke="#3aa3d6" stroke-width="1.4"/><circle cx="8.3" cy="320.8" r="2" fill="#1d4468"/><circle cx="8.3" cy="335" r="2" fill="#1d4468"/><circle cx="22.5" cy="321.3" r="2.4" fill="#e3121c"/></g><g><path d="M39.2 321.3 Q48 318 52.5 321.7" fill="none" stroke="#3aa3d6" stroke-width="1.4"/><path d="M39.2 321.3 Q37 330 40 335" fill="none" stroke="#3aa3d6" stroke-width="1.4"/><path d="M40 335 L52.5 321.7 M44 330 L39.2 321.3" stroke="#1d4468" stroke-width="1" fill="none"/><circle cx="52.5" cy="321.7" r="2" fill="#1d4468"/><circle cx="40" cy="335" r="2" fill="#1d4468"/><circle cx="39.2" cy="321.3" r="2.4" fill="#e3121c"/></g><g><path d="M14.2 350 Q24 352 23.5 362" fill="none" stroke="#3aa3d6" stroke-width="1.4"/><path d="M8.3 360 Q12 366 22.5 363.3" fill="none" stroke="#3aa3d6" stroke-width="1.4"/><path d="M14.2 350 L22.5 363.3 L8.3 360" fill="none" stroke="#1d4468" stroke-width="1"/><circle cx="8.3" cy="360" r="2" fill="#1d4468"/><circle cx="22.5" cy="363.3" r="2" fill="#1d4468"/><circle cx="14.2" cy="350" r="2.5" fill="#e3121c"/></g><g><path d="M38.3 350 H53 L38.3 364.2 Z" fill="#d9eaf6"/><path d="M53 351.2 Q53 362 38.3 364.2" fill="#d9eaf6" stroke="#3aa3d6" stroke-width="1.4"/><path d="M38.3 350 V364.2 L53 351.2 M38.3 350 H53" fill="none" stroke="#1d4468" stroke-width="1"/><circle cx="38.3" cy="350" r="2" fill="#1d4468"/><circle cx="38.3" cy="364.2" r="2" fill="#1d4468"/><circle cx="53" cy="351.2" r="2.4" fill="#e3121c"/></g><line x1="6" y1="374.5" x2="54.5" y2="374.5" stroke="#9a9a9a" stroke-width="1.6"/><g fill="#e3121c"><path d="M15.8 385 L13 389 H18.6 Z M15.8 403 L13 399 H18.6 Z M6 393.8 L10 391 V396.6 Z M25.5 393.8 L21.5 391 V396.6 Z"/><path d="M15.8 388 V392 M15.8 396 V400 M9.5 393.8 H13.5 M18 393.8 H22" stroke="#e3121c" stroke-width="1.6"/></g><g stroke-linejoin="round"><polygon points="35,395 45.5,389.5 55.5,395 45.5,401" fill="#d9eaf6" stroke="#3aa3d6" stroke-width="1.1"/><path d="M35 395 V397.5 L45.5 403.5 L55.5 397.5 V395" fill="none" stroke="#3aa3d6" stroke-width="1.1"/><path d="M45.5 384 L41.8 389 H44 V395 H47 V389 H49.2 Z" fill="#e3121c"/></g><g fill="none" stroke="#e3121c" stroke-width="1.5"><path d="M9.5 427 A6.8 6.8 0 0 1 19.5 418"/><path d="M22 420.5 A6.8 6.8 0 0 1 12 429.5"/></g><path d="M21.8 418.2 L17 415 L17.8 420.5 Z M9.8 429.5 L14.5 432.6 L13.7 427.1 Z" fill="#e3121c"/><g stroke-linejoin="round"><path d="M40.5 416.5 Q35 422 37 428 Q39 432 43.5 433 L46 429.5 Q42.5 428 41.5 425 Q40.5 421.5 44 419 Z" fill="#d9eaf6" stroke="#3aa3d6" stroke-width="1.1"/><path d="M44 419 Q48 414.5 52 417" fill="none" stroke="#1d4468" stroke-width="1"/><circle cx="53" cy="418.5" r="2.3" fill="#e3121c"/></g><g><rect x="6" y="444" width="19.8" height="19" fill="#d9eaf6" stroke="#1d4468" stroke-width="1.2"/><path d="M6 450 H18.5 V463" fill="none" stroke="#1d4468" stroke-width="1"/><path d="M14 456 L21 449.5" stroke="#e3121c" stroke-width="2.4"/><path d="M24.5 445.5 L17.5 446.5 L23.5 452.5 Z" fill="#e3121c"/></g><g fill="none"><path d="M38.5 447 A9 9 0 0 1 52 448" stroke="#3aa3d6" stroke-width="1.3"/><path d="M54 452 A9 9 0 0 1 48 463" stroke="#3aa3d6" stroke-width="1.3"/><path d="M40 461 A5.5 5.5 0 0 1 44 452" stroke="#1d4468" stroke-width="1.3"/></g><path d="M43 457 L49.5 450.5" stroke="#e3121c" stroke-width="2.4"/><path d="M53 446.5 L46 447.5 L52 453.5 Z" fill="#e3121c"/><g><path d="M14.5 485 V476" stroke="#3aa3d6" stroke-width="1.4"/><path d="M14.5 473.5 L12.3 477.5 H16.7 Z" fill="#3aa3d6"/><path d="M15 484 L22 478" stroke="#4aa84a" stroke-width="1.4"/><path d="M24 476.5 L19.5 477.3 L22.3 480.3 Z" fill="#4aa84a"/><path d="M15 484 L22 490" stroke="#e3121c" stroke-width="1.4"/><path d="M24 492 L19.5 491 L22.3 488 Z" fill="#e3121c"/><path d="M7 478 L13 482 M7 490 L13 486 M14.5 487 V494" stroke-dasharray="1 1" stroke="#c88" stroke-width="0.9"/><circle cx="14.5" cy="484" r="2.4" fill="#1d4468"/></g><g stroke-linejoin="round"><polygon points="44,474 44,491 36,491" fill="#fff" stroke="#1d4468" stroke-width="1.1"/><polygon points="47,474 47,491 55.5,491" fill="#d9eaf6" stroke="#3aa3d6" stroke-width="1.1"/><path d="M45.5 472 V493" stroke="#e3121c" stroke-width="1" stroke-dasharray="1.5 1"/></g><line x1="6" y1="501.3" x2="54.5" y2="501.3" stroke="#9a9a9a" stroke-width="1.6"/><g stroke-linejoin="round"><path d="M9 514.5 L17.5 510 L22.5 514 L21 521.5 L13 525.5 L9 521 Z" fill="#fff" stroke="#1d4468" stroke-width="1.2"/><circle cx="15.5" cy="518" r="2.4" fill="#e3121c"/><path d="M13 525.5 L8 528 H6" fill="none" stroke="#1d4468" stroke-width="1"/></g><g><path d="M36.5 522 L49.5 510" stroke="#1d4468" stroke-width="1"/><path d="M36 518 L40 524 M45 509 L50 515" stroke="#1d4468" stroke-width="1"/><text x="44" y="515" font-size="5" fill="#1d4468" font-family="Liberation Sans" transform="rotate(-40 44 515)">5</text><circle cx="52.5" cy="518" r="2.2" fill="#e3121c"/><circle cx="45" cy="526.5" r="2.2" fill="#e3121c"/></g><g><path d="M8.5 557 A12 12 0 0 1 23 542.5 Z" fill="#d9eaf6" stroke="#1d4468" stroke-width="1.3"/><path d="M11 553 A7.5 7.5 0 0 1 19.5 545.5" fill="none" stroke="#1d4468" stroke-width="1" stroke-dasharray="1 1.2"/></g><g><rect x="41.5" y="540.5" width="13.5" height="11" fill="#fff" stroke="#1d4468" stroke-width="1.1"/><text x="48.2" y="549" font-size="7" text-anchor="middle" fill="#1d4468" font-family="Liberation Serif">A1</text><path d="M38.5 543.5 V556" stroke="#1d4468" stroke-width="1.1"/><path d="M38.5 558.5 L36.5 554.5 H40.5 Z" fill="#1d4468"/></g><g><circle cx="15.5" cy="579" r="6.8" fill="#fff" stroke="#1d4468" stroke-width="1.2"/><path d="M5.5 579 H23" stroke="#1d4468" stroke-width="1.1"/><path d="M26 579 L21.5 575.5 V582.5 Z M16 570 L13.5 572.5 H18.5 Z M16 588 L13.5 585.5 H18.5 Z" fill="#1d4468"/><text x="15.5" y="577.5" font-size="3.5" text-anchor="middle" fill="#1d4468" font-family="Liberation Sans">C</text></g><g><path d="M40.5 588 L45.5 570 H48.5 L54 588" fill="none" stroke="#3aa3d6" stroke-width="2.6"/><path d="M42.5 582 H51.5" stroke="#3aa3d6" stroke-width="1.5"/><path d="M40 587 L45 569.5" stroke="#7cc6ea" stroke-width="1"/></g><line x1="6" y1="597.8" x2="54.5" y2="597.8" stroke="#9a9a9a" stroke-width="1.6"/><g><ellipse cx="15.5" cy="615" rx="9" ry="3.8" fill="none" stroke="#e3121c" stroke-width="2.3"/><path d="M15.5 605 V625" stroke="#1d4468" stroke-width="1.2"/><path d="M9 611 L13.5 610.5 L10.5 614 Z M22 619 L17.5 619.5 L20.5 616 Z" fill="#e3121c"/></g><g stroke-linejoin="round"><path d="M42 625 L39 617 Q38.5 615 40.5 615.5 L42.5 618 V610 Q43.5 608.5 44.5 610 V615 L47 615.5 L50 616.5 Q52 617.5 51.5 620 L50.5 625 Z" fill="#d9eaf6" stroke="#3aa3d6" stroke-width="1"/><path d="M38 608 H51" stroke="#e3121c" stroke-width="1.4"/><path d="M36.5 608 L39.5 605.5 V610.5 Z M52.5 608 L49.5 605.5 V610.5 Z" fill="#e3121c"/></g><g><circle cx="18" cy="642" r="5.5" fill="none" stroke="#1d4468" stroke-width="1.4"/><path d="M14 646 L7.5 652.5" stroke="#1d4468" stroke-width="2"/></g><g><rect x="37.5" y="637" width="16.5" height="16.5" fill="#d9eaf6" stroke="#3aa3d6" stroke-width="0.8" stroke-dasharray="1 1"/><circle cx="47.5" cy="643" r="4.8" fill="#fff" stroke="#1d4468" stroke-width="1.3"/><path d="M44 646.5 L39.5 651" stroke="#1d4468" stroke-width="1.8"/></g><g><circle cx="16.5" cy="675.5" r="4.8" fill="none" stroke="#1d4468" stroke-width="1.3"/><path d="M13 679 L8 684" stroke="#1d4468" stroke-width="1.8"/><path d="M7 666 L10.5 667 L8 669.5 Z M25 666 L21.5 667 L24 669.5 Z M25 685 L21.5 684 L24 681.5 Z" fill="#e3121c"/><path d="M8 667.5 L11 670.5 M24 667.5 L21 670.5 M24 683.5 L21 680.5" stroke="#e3121c" stroke-width="1.3"/></g><g stroke-linejoin="round"><path d="M38.5 680 V670 H41.5 L43 668 H46 L47.5 670 H52.5 V674" fill="none" stroke="#1d4468" stroke-width="1.2"/><path d="M38.5 680 H44.5" stroke="#1d4468" stroke-width="1.2"/><path d="M47 675.5 H50 Q54.5 676 54 680.5 Q53.5 684 49.5 684 H45" fill="none" stroke="#e3121c" stroke-width="1.3"/><path d="M45 675.5 L48 673 V678 Z" fill="#e3121c"/></g><line x1="6" y1="692.8" x2="54.5" y2="692.8" stroke="#9a9a9a" stroke-width="1.6"/><g><rect x="9.5" y="702.5" width="12" height="9" rx="1" fill="#fff" stroke="#1d4468" stroke-width="1.1"/><circle cx="15.5" cy="707" r="2.4" fill="#e3121c"/><path d="M12 711.5 L9 720 M19 711.5 L22 720 M15.5 711.5 V719" stroke="#1d4468" stroke-width="1.1"/><path d="M13 701.5 H18" stroke="#1d4468" stroke-width="1.2"/></g><g><circle cx="45.5" cy="701.5" r="1.6" fill="#1d4468"/><path d="M45 704 L43.5 711 L40 719.5 M43.5 711 L47.5 714.5 L48 719.5 M44.5 706 L48.5 709" stroke="#1d4468" stroke-width="2" fill="none" stroke-linecap="round"/><rect x="40.5" y="704" width="2.5" height="4" fill="#e3121c"/><path d="M51 707 V720" stroke="#9bd0ea" stroke-width="1.2"/></g><g><path d="M8 741 Q15.5 731.5 24 741 Q15.5 749.5 8 741 Z" fill="#fff" stroke="#1d4468" stroke-width="1.3"/><circle cx="16" cy="741" r="4" fill="#3aa3d6"/><circle cx="16" cy="741" r="1.6" fill="#1d4468"/><path d="M8.5 739 Q15.5 733 23.5 739" fill="none" stroke="#1d4468" stroke-width="2"/><path d="M6 737 L9.5 738 M6.5 740 L9 740" stroke="#1d4468" stroke-width="0.8"/></g><g fill="none"><path d="M52.5 731.5 L36 741 L52.5 750.5" stroke="#1d4468" stroke-width="1.2" stroke-dasharray="1.5 1"/><path d="M36 741 L48 735 M36 741 L48 747" stroke="#1d4468" stroke-width="1.2"/><path d="M46 735 Q43 741 46 747" stroke="#3aa3d6" stroke-width="1.1"/><path d="M51 734.5 Q53.5 741 51 747.5" stroke="#3aa3d6" stroke-width="1.6"/></g><line x1="6" y1="758.5" x2="54.5" y2="758.5" stroke="#9a9a9a" stroke-width="1.6"/><g fill="none" stroke="#2a6aa0" stroke-linejoin="round"><path d="M15 766.5 L23 771 V781.5 L15 786 L7 781.5 V771 Z" stroke-width="2.2"/><path d="M15 770.5 L19.5 773 V779 L15 781.5 L10.5 779 V773 Z" stroke-width="1.3"/><path d="M10.5 773 L15 775.5 L19.5 773 M15 775.5 V781.5" stroke-width="0.8"/></g><path d="M21.5 778 V783 H19 L23.5 788.5 L28 783 H25.5 V778 Z" fill="#fff" stroke="#2a6aa0" stroke-width="1.2"/><g fill="none" stroke-width="3" stroke-linecap="butt"><path d="M36.5 768.5 Q44 770 46 775.5 Q48 770 55 768.5" stroke="#2a6aa0"/><path d="M36.5 785.5 Q44 784 46 778.5 Q48 784 55 785.5" stroke="#1d4468"/><path d="M38 776.5 Q46 780 54 776.5" stroke="#2a6aa0" stroke-width="2"/></g><circle cx="52.5" cy="782.5" r="5" fill="#fff" stroke="#2a6aa0" stroke-width="1.4"/><path d="M50 781.5 A2.5 2.5 0 0 1 55 782 M55 783.5 A2.5 2.5 0 0 1 50 783" fill="none" stroke="#2a6aa0" stroke-width="0.9"/><g fill="none" stroke="#2a6aa0" stroke-width="2" stroke-linejoin="round"><path d="M8 802.5 L15.5 798.5 L23 802.5 L15.5 806.5 Z"/><path d="M8 807 L15.5 811 L23 807 M8 811.5 L15.5 815.5 L20 813"/></g><path d="M12.5 802.5 A3 2 0 0 1 18.5 802.5" fill="none" stroke="#2a6aa0" stroke-width="1.2"/><path d="M19.5 808.5 H24 V805.5 L29.5 811 L24 816.5 V813.5 H19.5 Z" fill="#fff" stroke="#2a6aa0" stroke-width="1.2"/><g fill="none" stroke-width="3" stroke-linecap="butt"><path d="M36.5 798.5 Q44 800 46 805.5 Q48 800 55 798.5" stroke="#2a6aa0"/><path d="M36.5 815.5 Q44 814 46 808.5 Q48 814 55 815.5" stroke="#1d4468"/><path d="M38 806.5 Q46 810 54 806.5" stroke="#2a6aa0" stroke-width="2"/></g><circle cx="52.5" cy="812.5" r="4.6" fill="#fff" stroke="#2a6aa0" stroke-width="1.8" stroke-dasharray="1.4 0.9"/><circle cx="52.5" cy="812.5" r="1.7" fill="none" stroke="#2a6aa0" stroke-width="1"/><circle cx="13.7" cy="884.2" r="6.6" fill="none" stroke="#b4b4b8" stroke-width="1"/><path d="M13.7 888.6 L11.5 884 A2.6 2.6 0 1 1 15.9 884 Z" fill="#8e8e92"/><circle cx="13.7" cy="882.6" r="0.9" fill="#f0eff4"/><circle cx="40.5" cy="884" r="6.4" fill="#fff" stroke="#222" stroke-width="1.3"/><circle cx="40.5" cy="880.3" r="1.3" fill="#111"/><path d="M38.6 882.3 H42.4 L42 886 H41.3 V889.5 H39.7 V886 H39 Z" fill="#111"/><path d="M0 895.5 Q0.5 899 4 899 H0 Z" fill="#1a1826"/></svg>


 <div id="vp">
 <svg id="scene" width="1194" height="753" viewBox="64 116 1194 753" style="position:absolute;left:0;top:0"><!-- axes -->
<line x1="64.8" y1="456.5" x2="353" y2="569.3" stroke="#cf8a8a" stroke-width="1.1" stroke-dasharray="1.5 2"/>
<line x1="353" y1="569.3" x2="64.8" y2="751" stroke="#7cc47c" stroke-width="1.1" stroke-dasharray="1.5 2"/>
<line x1="353" y1="569.3" x2="397.5" y2="869" stroke="#8480d4" stroke-width="1.1" stroke-dasharray="1.5 2"/>
<line x1="285.8" y1="116" x2="353" y2="569.3" stroke="#5a52c4" stroke-width="1.3"/>
<line x1="353" y1="569.3" x2="1121" y2="869" stroke="#c04a56" stroke-width="1.3"/>
<line x1="353" y1="569.3" x2="1063.1" y2="116.7" stroke="#5cbf5c" stroke-width="1.3"/>
<!-- cabinet 1 feet -->
<g fill="#151515">
<path d="M390 556 Q389.5 565 399 566 Q408.5 566 408.5 557 L408 553 L391 553 Z"/>
<path d="M595 543 Q595 553 603 553.5 Q611.5 553.5 611.5 545 L611 540 L596 540 Z"/>
<path d="M517.5 607 Q517 613.5 527 614 Q537 613.5 536.5 606 L536 600 L518 600 Z"/>
</g>
<!-- cabinet 1 -->
<polygon points="512,326.5 638.6,263 645.5,512 530,600" fill="#c4c4c4" stroke="#333" stroke-width="0.9"/>
<polygon points="311.5,281.7 455,227 638.6,263 512,326.5" fill="#cbcbcb" stroke="#333" stroke-width="0.9"/>
<polygon points="311.5,281.7 507,325.5 526,601 348.4,538" fill="#fdfdfd" stroke="#444" stroke-width="0.9"/>
<polygon points="507,325.5 512,326.5 530,600 526,601" fill="#d6d6d6" stroke="#222" stroke-width="0.9"/>
<!-- cab1 interior -->
<polygon points="322,280.5 457.5,229 457.1,245.6 462,298.5 346.7,270.7" fill="#c3c3c3" stroke="none"/>
<polygon points="457.1,245.6 604.6,276.2 528.7,313.7 462,298.5" fill="#fefefe" stroke="#333" stroke-width="0.8"/>
<polygon points="441.1,235.9 613.6,271.3 604.6,276.2 441.1,241.4" fill="#fafafa" stroke="#333" stroke-width="0.8"/>
<line x1="346.7" y1="270.7" x2="528.7" y2="313.7" stroke="#333" stroke-width="0.8"/>
<line x1="322" y1="280.5" x2="457.5" y2="229" stroke="#333" stroke-width="0.8"/>
<line x1="632.4" y1="263" x2="509.3" y2="324.9" stroke="#333" stroke-width="0.8"/>
<line x1="312" y1="280.5" x2="509" y2="324.8" stroke="#262626" stroke-width="1.5"/>
<!-- cabinet 2 -->
<g stroke-linejoin="round" stroke-linecap="round">
<!-- feet -->
<path d="M673.5 661.5 Q673 675 684.3 675.5 Q695.5 675 695.2 663.5 L694.8 659.5 L673.8 659.5 Z" fill="#1010e8"/>
<path d="M841.5 726.5 Q841 740 852.2 740.5 Q863.5 740 863.2 728.5 L862.8 723.5 L841.8 723.5 Z" fill="#1010e8"/>
<!-- side panel -->
<polygon points="905,419.6 998,336 958.5,614.2 875.7,729.5" fill="#c4c4c4"/>
<!-- top -->
<polygon points="635.8,356.3 753,286.5 998,336 905,419.6" fill="#cbcbcb"/>
<!-- door -->
<polygon points="630.5,357 907.9,423.9 871,731.8 634,645" fill="#fdfdfd"/>
<!-- interior -->
<polygon points="663.4,345.1 742.4,296.7 754.6,307.8 751.8,365.7" fill="#c2c2c2"/>
<polygon points="754.6,307.8 971,351.4 916.1,403.8 751.8,365.7" fill="#fefefe"/>
<polygon points="741.8,297.8 977,344 971,351.4 742.4,305" fill="#fafafa"/>
<!-- blue edges -->
<g stroke="#1a1aea" fill="none">
<line x1="635.6" y1="356.2" x2="756.8" y2="287.2" stroke-width="1.6"/>
<line x1="643.9" y1="356.8" x2="742.4" y2="296.7" stroke-width="1.3"/>
<line x1="663.4" y1="345.1" x2="916.1" y2="403.8" stroke-width="1.3"/>
<line x1="754.6" y1="307.8" x2="751.8" y2="365.7" stroke-width="1"/>
<polyline points="741.8,297.8 977,344" stroke-width="1.4"/>
<polyline points="742.4,305 971,351.4" stroke-width="1.4"/>
<line x1="741.8" y1="297.8" x2="742.4" y2="305" stroke-width="1"/>
<line x1="904.5" y1="419" x2="989.5" y2="337" stroke-width="1.5"/>
<line x1="916.1" y1="403.8" x2="975" y2="347" stroke-width="1.2"/>
<line x1="635.6" y1="356.8" x2="905" y2="420.5" stroke-width="2.6"/>
<line x1="909.5" y1="425.6" x2="875.7" y2="729.5" stroke-width="2.4"/>
<line x1="634" y1="645" x2="871" y2="732.5" stroke-width="1.5"/>
<line x1="958.9" y1="614.2" x2="875.7" y2="729.5" stroke-width="1.5"/>
</g>
<!-- green bounding box -->
<g stroke="#a8f544" stroke-width="3.1" fill="none">
<polyline points="629.5,357 751.8,285.2 998.5,335.5 907.9,423.9 629.5,357"/>
<line x1="629.5" y1="357" x2="634" y2="678.3"/>
<line x1="907.9" y1="423.9" x2="868.7" y2="770"/>
<line x1="998.5" y1="335.5" x2="955.6" y2="642.3"/>
<line x1="634" y1="678.3" x2="868.7" y2="770"/>
<line x1="868.7" y1="770" x2="955.6" y2="642.3"/>
<line x1="634" y1="678.3" x2="659.5" y2="655"/>
<line x1="940.3" y1="641.6" x2="955.6" y2="642.3"/>
</g>
<!-- red dashed plane -->
<g stroke="#e41616" stroke-width="2.6" fill="none" stroke-dasharray="4.5 3.5" stroke-linecap="butt">
<line x1="882" y1="274.6" x2="749" y2="368"/>
<path d="M749 368 Q745.5 371 745.5 377 L731 759.2"/>
<line x1="882" y1="274.6" x2="878.4" y2="308.7"/>
<line x1="851.5" y1="296.6" x2="845.4" y2="386.7"/>
<line x1="819.9" y1="317.3" x2="815" y2="379.4"/>
<line x1="784.5" y1="342.9" x2="782" y2="372"/>
<line x1="822.3" y1="378.2" x2="858.8" y2="352.6"/>
<line x1="731" y1="759.2" x2="778.1" y2="704.1"/>
<line x1="766" y1="694" x2="764" y2="720"/>
<line x1="735" y1="642" x2="749" y2="631"/>
<line x1="733" y1="702" x2="748" y2="688"/>
<line x1="741" y1="572" x2="751" y2="566"/>
<line x1="739" y1="515" x2="750" y2="507"/>
<line x1="742" y1="450" x2="756" y2="438"/>
</g>
<!-- inference dotted line -->
<line x1="692" y1="482" x2="934.4" y2="552.2" stroke="#222" stroke-width="1.5" stroke-dasharray="2 3"/>
<line x1="934.4" y1="553.5" x2="970.4" y2="563.4" stroke="#e41e1e" stroke-width="2"/>
<!-- grips -->
<g stroke-linejoin="round">
<polygon points="692,475 699,478.5 699.2,486 692.5,490 686,486.5 685.8,478.5" fill="#e00000" stroke="#3a0000" stroke-width="1.3"/>
<path d="M685.8 478.5 L692.5 482.5 L699 478.5 M692.5 482.5 V490" stroke="#7a0000" stroke-width="1.1" fill="none"/>
<path d="M699 485 L703 487.5" stroke="#222" stroke-width="1.5"/>
<polygon points="931,545 940.5,548 940.6,556 936,560.8 927,558 926.9,549.5" fill="#f6f6f6" stroke="#2a2a2a" stroke-width="1.1"/>
<path d="M927 549.5 L936 552.5 L940.5 548 M936 552.5 V560.8" stroke="#555" stroke-width="0.8" fill="none"/>
<path d="M923 550 L926 551" stroke="#222" stroke-width="1.4"/>
<polygon points="745.5,565.5 755.5,568 756,576.5 746,574" fill="#111" stroke="#6fcf6f" stroke-width="1.3"/>
<polygon points="747.5,570 752.5,568.5 754,573.5 749,575" fill="#e00000"/>
<polygon points="813,341.5 823.5,343.5 824,352 813.5,350.5" fill="#111" stroke="#6fcf6f" stroke-width="1.3"/>
<polygon points="815.5,343 820,342.5 821,345" fill="#e00000"/>
</g>
</g>
<!-- cabinet 3 -->
<path d="M1151.5 846 Q1151 857 1165 859 Q1179 859 1179 848 L1178 838 L1153 838 Z" fill="#151515"/>
<polygon points="1256.4,386 1260,386 1260,869 1233.3,868.3 1122,827 1205.8,494.4" fill="#fdfdfd"/>
<polygon points="1256.4,386 1260,386 1260,512.2 1205.8,498.9 1205.8,493.6" fill="#cbcbcb"/>
<polygon points="1256.4,416.2 1260,416 1260,483.8 1240.4,479.3" fill="#fefefe"/>
<polygon points="1256.4,407.3 1256.4,416.2 1240.4,479.3 1226.2,476.7" fill="#c2c2c2"/>
<g stroke="#333" fill="none" stroke-width="0.9">
<line x1="1256.4" y1="386" x2="1205.8" y2="493.6"/>
<line x1="1256.4" y1="407.3" x2="1217.3" y2="496.2"/>
<line x1="1226.2" y1="476.7" x2="1260" y2="484.5"/>
<line x1="1240.4" y1="479.3" x2="1256.4" y2="416.2"/>
<line x1="1205.8" y1="493.6" x2="1260" y2="506.9" stroke-width="1.6" stroke="#222"/>
<line x1="1205.8" y1="498.9" x2="1260" y2="512.5"/>
<line x1="1205.8" y1="494.4" x2="1122" y2="827"/>
<line x1="1122" y1="827" x2="1235" y2="869"/>
</g>
</svg>
 </div>

 <div id="panel">
  <div class="abs" style="left:0;top:0;width:333px;height:27px;background:#efeef3"></div>
  <div class="t" style="left:4px;top:7.7px;font-size:11.6px;line-height:1;font-weight:bold;color:#46464a">Zasobnik domyślny</div>
  <div class="abs" style="left:304px;top:8.5px;width:11px;height:11px;border:1px solid #b0b0b4;border-radius:2px"></div>
  <svg class="abs" style="left:304px;top:8.5px" width="11" height="11" viewBox="0 0 11 11"><path d="M3.8 2.2 H7.2 V5.5 L8.2 7.2 H2.8 L3.8 5.5 Z" fill="#6c6c6e"/><path d="M5.5 7.2 V9.3" stroke="#6c6c6e" stroke-width="0.8"/></svg>
  <div class="abs" style="left:320.5px;top:8.5px;width:11px;height:11px;border:1px solid #b0b0b4;border-radius:2px"></div>
  <svg class="abs" style="left:320.5px;top:8.5px" width="11" height="11" viewBox="0 0 11 11"><path d="M2.5 2.5L8.5 8.5M8.5 2.5L2.5 8.5" stroke="#6a6a6e" stroke-width="1.1"/></svg>
  <div class="abs" style="left:0;top:27px;width:333px;height:1px;background:#d6d6dc"></div>
<div class="row" style="top:29.7px"><svg class="abs" style="left:7px;top:5px" width="9" height="13" viewBox="0 0 9 13"><path d="M1.5 1 L7.5 6.5 L1.5 12" stroke="#6a6a70" stroke-width="1.3" fill="none"/></svg><div class="lbl">Materiały</div><div class="x"><svg class="abs" style="left:4px;top:4px" width="10" height="10" viewBox="0 0 10 10"><path d="M1.5 1.5L8.5 8.5M8.5 1.5L1.5 8.5" stroke="#555" stroke-width="1.2"/></svg></div></div>
<div class="row" style="top:55.1px"><svg class="abs" style="left:7px;top:5px" width="9" height="13" viewBox="0 0 9 13"><path d="M1.5 1 L7.5 6.5 L1.5 12" stroke="#6a6a70" stroke-width="1.3" fill="none"/></svg><div class="lbl">Informacje o elemencie</div><div class="x"><svg class="abs" style="left:4px;top:4px" width="10" height="10" viewBox="0 0 10 10"><path d="M1.5 1.5L8.5 8.5M8.5 1.5L1.5 8.5" stroke="#555" stroke-width="1.2"/></svg></div></div>
<div class="row" style="top:80.6px"><svg class="abs" style="left:7px;top:5px" width="9" height="13" viewBox="0 0 9 13"><path d="M1.5 1 L7.5 6.5 L1.5 12" stroke="#6a6a70" stroke-width="1.3" fill="none"/></svg><div class="lbl">Środowiska</div><div class="x"><svg class="abs" style="left:4px;top:4px" width="10" height="10" viewBox="0 0 10 10"><path d="M1.5 1.5L8.5 8.5M8.5 1.5L1.5 8.5" stroke="#555" stroke-width="1.2"/></svg></div></div>
<div class="row" style="top:106.0px"><svg class="abs" style="left:7px;top:5px" width="9" height="13" viewBox="0 0 9 13"><path d="M1.5 1 L7.5 6.5 L1.5 12" stroke="#6a6a70" stroke-width="1.3" fill="none"/></svg><div class="lbl">Sceny</div><div class="x"><svg class="abs" style="left:4px;top:4px" width="10" height="10" viewBox="0 0 10 10"><path d="M1.5 1.5L8.5 8.5M8.5 1.5L1.5 8.5" stroke="#555" stroke-width="1.2"/></svg></div></div>
<div class="row" style="top:131.5px"><svg class="abs" style="left:7px;top:5px" width="9" height="13" viewBox="0 0 9 13"><path d="M1.5 1 L7.5 6.5 L1.5 12" stroke="#6a6a70" stroke-width="1.3" fill="none"/></svg><div class="lbl">Tagi</div><div class="x"><svg class="abs" style="left:4px;top:4px" width="10" height="10" viewBox="0 0 10 10"><path d="M1.5 1.5L8.5 8.5M8.5 1.5L1.5 8.5" stroke="#555" stroke-width="1.2"/></svg></div></div>
<div class="row" style="top:156.9px"><svg class="abs" style="left:7px;top:5px" width="9" height="13" viewBox="0 0 9 13"><path d="M1.5 1 L7.5 6.5 L1.5 12" stroke="#6a6a70" stroke-width="1.3" fill="none"/></svg><div class="lbl">Zmiękczanie krawędzi</div><div class="x"><svg class="abs" style="left:4px;top:4px" width="10" height="10" viewBox="0 0 10 10"><path d="M1.5 1.5L8.5 8.5M8.5 1.5L1.5 8.5" stroke="#555" stroke-width="1.2"/></svg></div></div>
<div class="row" style="top:182.4px"><svg class="abs" style="left:7px;top:5px" width="9" height="13" viewBox="0 0 9 13"><path d="M1.5 1 L7.5 6.5 L1.5 12" stroke="#6a6a70" stroke-width="1.3" fill="none"/></svg><div class="lbl">Komponenty</div><div class="x"><svg class="abs" style="left:4px;top:4px" width="10" height="10" viewBox="0 0 10 10"><path d="M1.5 1.5L8.5 8.5M8.5 1.5L1.5 8.5" stroke="#555" stroke-width="1.2"/></svg></div></div>
 </div>

 <!-- status bar -->
 <div class="abs" style="left:58px;top:874px;width:1px;height:20px;background:#d0d0d6"></div>
 <div class="t" style="left:66px;top:878.5px;font-size:12.4px;color:#58585e">Box Stretching: Select a grip and Click - [600,0 mm]</div>
 <div class="abs" style="left:1348.5px;top:874px;width:1px;height:21px;background:#d4d4da"></div>
 <div class="t" style="left:1360.3px;top:880.3px;font-size:11.4px;color:#58585e">Red</div>
 <div class="abs" style="left:1388px;top:872.5px;width:187px;height:24.5px;background:#fff;border:1px solid #cfcfd4;border-radius:2px"></div>
 <div class="t" style="left:1390.6px;top:880.3px;font-size:11.4px;color:#444">1.00</div>
</div>
<div class="abs" style="left:0;top:0;width:1600px;height:1px;background:#0d0c14"></div>
</body></html>
